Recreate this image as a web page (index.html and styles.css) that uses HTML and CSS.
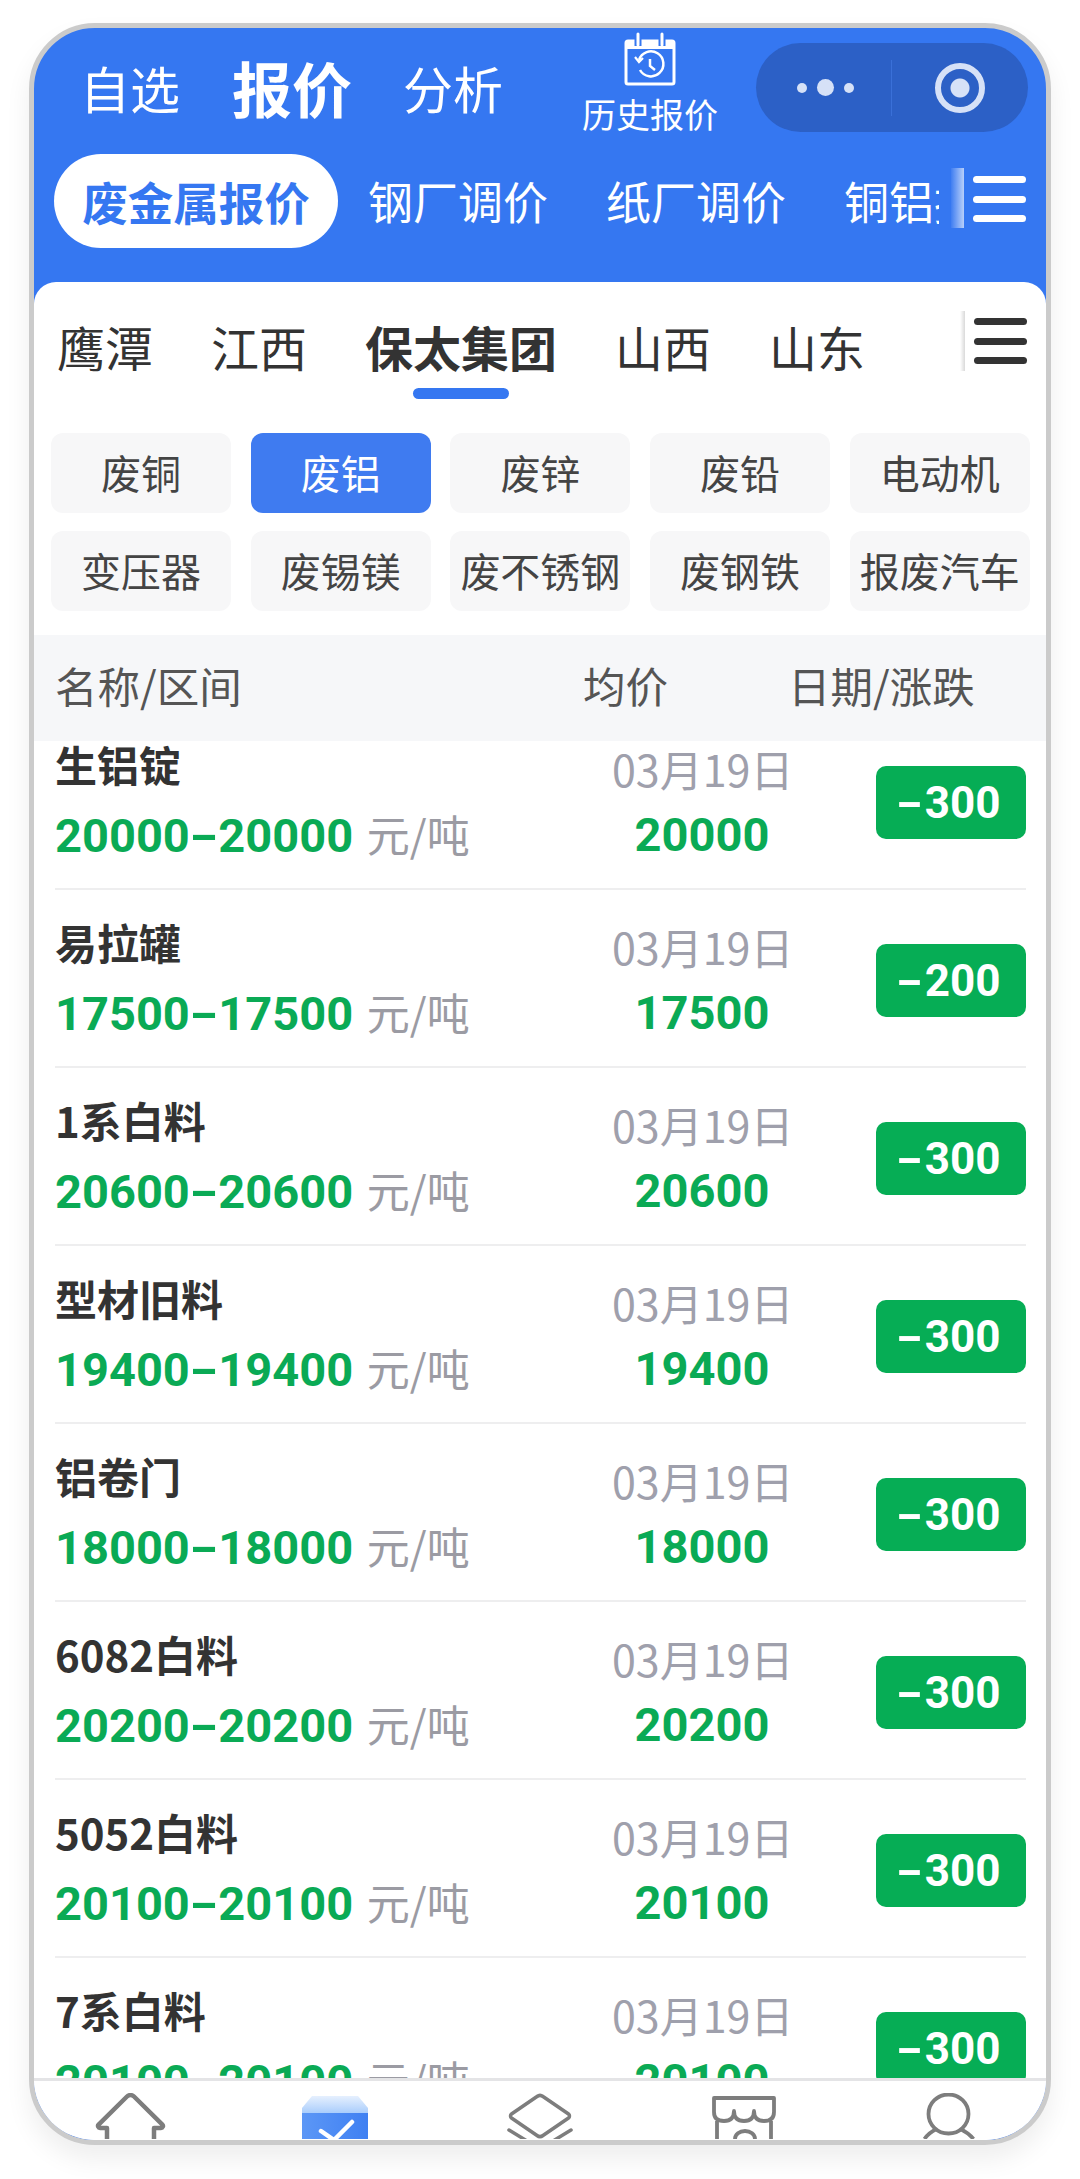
FILE: index.html
```html
<!DOCTYPE html>
<html lang="zh">
<head>
<meta charset="utf-8">
<title>报价</title>
<link rel="stylesheet" href="styles.css">
</head>
<body>
<div class="frame">
  <div class="phone">
    <header class="top">
      <div class="top-row">
        <nav class="main-tabs">
          <span class="mt">自选</span>
          <span class="mt mt-on">报价</span>
          <span class="mt">分析</span>
        </nav>
        <div class="history">
          <svg class="cal" width="52" height="54" viewBox="0 0 52 54">
            <path d="M4 9H48a2 2 0 0 1 2 2V50a2 2 0 0 1-2 2H4a2 2 0 0 1-2-2V11a2 2 0 0 1 2-2Z" fill="none" stroke="#fff" stroke-width="3"/>
            <rect x="2" y="9" width="48" height="8" fill="#fff"/>
            <path d="M14 2V14M38 2V14" stroke="#3577f1" stroke-width="7"/>
            <path d="M14 2V13M38 2V13" stroke="#fff" stroke-width="3" stroke-linecap="round"/>
            <path d="M15 28a12.500 12.500 0 1 1 1 10" fill="none" stroke="#fff" stroke-width="2.500"/>
            <path d="M11 25l4 5 4-4" fill="none" stroke="#fff" stroke-width="2.200"/>
            <path d="M26 27V34L31 38" fill="none" stroke="#fff" stroke-width="2.500"/>
          </svg>
          <span class="history-t">历史报价</span>
        </div>
        <div class="capsule">
          <div class="cap-l"><i class="d"></i><i class="d d-big"></i><i class="d"></i></div>
          <div class="cap-r"><i class="ring"></i></div>
        </div>
      </div>
      <div class="cat-row">
        <span class="pill">废金属报价</span>
        <span class="cat">钢厂调价</span>
        <span class="cat">纸厂调价</span>
        <span class="cat cat-cut">铜铝报价</span>
        <span class="fade"></span>
        <span class="burger burger-w"><i></i><i></i><i></i></span>
      </div>
    </header>
    <main class="sheet">
      <div class="region-row">
        <span class="rg">鹰潭</span>
        <span class="rg">江西</span>
        <span class="rg rg-on">保太集团</span>
        <span class="rg">山西</span>
        <span class="rg">山东</span>
        <span class="fade fade-d"></span>
        <span class="burger burger-d"><i></i><i></i><i></i></span>
      </div>
      <div class="chips">
        <span class="chip">废铜</span><span class="chip chip-on">废铝</span><span class="chip">废锌</span><span class="chip">废铅</span><span class="chip">电动机</span>
        <span class="chip">变压器</span><span class="chip">废锡镁</span><span class="chip">废不锈钢</span><span class="chip">废钢铁</span><span class="chip">报废汽车</span>
      </div>
      <div class="thead">
        <span class="th1">名称/区间</span>
        <span class="th2">均价</span>
        <span class="th3">日期/涨跌</span>
      </div>
      <div class="list">
        <div class="rows">
          <div class="row"><div class="c1"><div class="nm">生铝锭</div><div class="rng"><b>20000<i class="hy">-</i>20000</b> <span>元/吨</span></div></div><div class="c2"><div class="dt">03月19日</div><div class="avg">20000</div></div><div class="c3"><span class="bdg"><i class="hy">-</i>300</span></div></div>
          <div class="row"><div class="c1"><div class="nm">易拉罐</div><div class="rng"><b>17500<i class="hy">-</i>17500</b> <span>元/吨</span></div></div><div class="c2"><div class="dt">03月19日</div><div class="avg">17500</div></div><div class="c3"><span class="bdg"><i class="hy">-</i>200</span></div></div>
          <div class="row"><div class="c1"><div class="nm">1系白料</div><div class="rng"><b>20600<i class="hy">-</i>20600</b> <span>元/吨</span></div></div><div class="c2"><div class="dt">03月19日</div><div class="avg">20600</div></div><div class="c3"><span class="bdg"><i class="hy">-</i>300</span></div></div>
          <div class="row"><div class="c1"><div class="nm">型材旧料</div><div class="rng"><b>19400<i class="hy">-</i>19400</b> <span>元/吨</span></div></div><div class="c2"><div class="dt">03月19日</div><div class="avg">19400</div></div><div class="c3"><span class="bdg"><i class="hy">-</i>300</span></div></div>
          <div class="row"><div class="c1"><div class="nm">铝卷门</div><div class="rng"><b>18000<i class="hy">-</i>18000</b> <span>元/吨</span></div></div><div class="c2"><div class="dt">03月19日</div><div class="avg">18000</div></div><div class="c3"><span class="bdg"><i class="hy">-</i>300</span></div></div>
          <div class="row"><div class="c1"><div class="nm">6082白料</div><div class="rng"><b>20200<i class="hy">-</i>20200</b> <span>元/吨</span></div></div><div class="c2"><div class="dt">03月19日</div><div class="avg">20200</div></div><div class="c3"><span class="bdg"><i class="hy">-</i>300</span></div></div>
          <div class="row"><div class="c1"><div class="nm">5052白料</div><div class="rng"><b>20100<i class="hy">-</i>20100</b> <span>元/吨</span></div></div><div class="c2"><div class="dt">03月19日</div><div class="avg">20100</div></div><div class="c3"><span class="bdg"><i class="hy">-</i>300</span></div></div>
          <div class="row"><div class="c1"><div class="nm">7系白料</div><div class="rng"><b>20100<i class="hy">-</i>20100</b> <span>元/吨</span></div></div><div class="c2"><div class="dt">03月19日</div><div class="avg">20100</div></div><div class="c3"><span class="bdg"><i class="hy">-</i>300</span></div></div>
        </div>
      </div>
      <footer class="tabbar">
        <svg class="ti ti-home" width="71" height="46" viewBox="0 0 71 46"><path d="M12 46V35H5a2 2 0 0 1-1.400-3.400L32 3.500a5 5 0 0 1 7 0L67.400 31.600a2 2 0 0 1-1.400 3.400H59V46" fill="none" stroke="#7d7d7d" stroke-width="4.500" stroke-linejoin="round"/></svg>
        <svg class="ti ti-box" width="66" height="46" viewBox="0 0 66 46"><defs><linearGradient id="bg1" x1="0" y1="0" x2="0" y2="1"><stop offset="0" stop-color="#e6f0fe"/><stop offset="1" stop-color="#a9cdfc"/></linearGradient><linearGradient id="bg2" x1="0" y1="0" x2="1" y2="0"><stop offset="0" stop-color="#5c97f6"/><stop offset="1" stop-color="#3f80f2"/></linearGradient></defs><path d="M10 3H56L66 15V20H0V15Z" fill="url(#bg1)"/><rect y="20" width="66" height="26" fill="url(#bg2)"/><path d="M19 38L32 47L50 29" fill="none" stroke="#fff" stroke-width="4.500" stroke-linecap="round"/></svg>
        <svg class="ti ti-layers" width="68" height="46" viewBox="0 0 66 46"><path d="M30 3.500a5 5 0 0 1 6 0L61.500 21a2.500 2.500 0 0 1 0 4L36 42.500a5 5 0 0 1-6 0L4.500 25a2.500 2.500 0 0 1 0-4Z" fill="none" stroke="#7d7d7d" stroke-width="3.500"/><path d="M2 37L20 48M64 37L46 48" fill="none" stroke="#7d7d7d" stroke-width="3.500" stroke-linecap="round"/></svg>
        <svg class="ti ti-store" width="66" height="46" viewBox="0 0 64 46"><path d="M2 5H62V19q0 9-10 9q-10 0-10-10q0 10-10 10q-10 0-10-10q0 10-10 10q-10 0-10-9Z" fill="none" stroke="#7d7d7d" stroke-width="3.800" stroke-linejoin="round"/><path d="M5 28V46M59 28V46" stroke="#7d7d7d" stroke-width="3.800"/><path d="M23 46a10 8 0 0 1 20 0" fill="none" stroke="#7d7d7d" stroke-width="3.800"/></svg>
        <svg class="ti ti-user" width="53" height="46" viewBox="0 0 52 46"><ellipse cx="25" cy="21" rx="20" ry="19.500" fill="none" stroke="#7d7d7d" stroke-width="3.800"/><path d="M13 36Q5 40 1 46M37 36Q45 40 50 46" fill="none" stroke="#7d7d7d" stroke-width="3.800"/></svg>
      </footer>
    </main>
  </div>
</div>
</body>
</html>
```
FILE: styles.css
```css
*{box-sizing:border-box}
html,body{margin:0;padding:0;background:#fff}
body{width:1080px;height:2179px;overflow:hidden;font-family:"Noto Sans CJK SC","Noto Sans",sans-serif}
.frame{padding:23px 29px 0 29px;height:2179px}
.phone{width:1022px;height:2122px;border:5px solid #cbcbcb;border-radius:66px;overflow:hidden;background:#3577f1;display:flex;flex-direction:column;box-shadow:0 14px 26px rgba(0,0,0,.07)}
.top{height:254px;flex:none;color:#fff;padding:0 0 0 20px}
.top-row{height:126px;display:flex;align-items:flex-start}
.main-tabs{display:flex;align-items:center;height:100px;margin-top:9px;padding-left:26px}
.mt{font-size:50px;line-height:60px;width:100px;margin-right:52px;white-space:nowrap}
.mt-on{font-size:60px;font-weight:700;width:120px;margin-right:51px}
.main-tabs .mt:last-child{margin-right:0}
.history{display:flex;flex-direction:column;align-items:center;margin-left:77px;width:140px;padding-top:4px}
.cal{display:block}
.history-t{font-size:34px;line-height:44px;margin-top:6px;white-space:nowrap}
.capsule{margin-left:36px;margin-top:15px;width:272px;height:89px;border-radius:45px;background:#2c60c6;display:flex;align-items:center;flex:none}
.cap-l{width:136px;height:56px;display:flex;align-items:center;justify-content:center;gap:10px;border-right:1px solid #3a70d8;padding-left:4px}
.d{width:10px;height:10px;border-radius:50%;background:#d6e1f7;display:block}
.d-big{width:17px;height:17px}
.cap-r{flex:1;display:flex;align-items:center;justify-content:center}
.ring{display:block;width:50px;height:50px;border-radius:50%;border:6px solid #d6e1f7;position:relative;background:radial-gradient(circle,#d6e1f7 0 9px,transparent 10px)}
.cat-row{height:94px;display:flex;align-items:center;position:relative;overflow:hidden;width:991px}
.pill{width:284px;height:94px;border-radius:47px;background:#fff;color:#3577f1;font-size:45.500px;font-weight:700;display:flex;align-items:center;justify-content:center;flex:none;white-space:nowrap}
.cat{font-size:45px;line-height:60px;width:180px;margin-left:30px;flex:none;white-space:nowrap}
.cat+.cat{margin-left:58px}
.cat-cut{width:95px;overflow:hidden}
.fade{position:absolute;right:81px;top:14px;width:13px;height:60px;background:linear-gradient(90deg,rgba(255,255,255,.05),rgba(255,255,255,.65))}
.burger{position:absolute;right:19px;top:22px;width:53px;height:46px;display:flex;flex-direction:column;justify-content:space-between}
.burger i{display:block;height:7px;border-radius:4px}
.burger-w i{background:#fff}
.sheet{flex:1;min-height:0;background:#fff;border-radius:22px 22px 0 0;display:flex;flex-direction:column;position:relative;overflow:hidden}
.region-row{height:126px;flex:none;display:flex;align-items:flex-start;position:relative;padding-left:23px}
.rg{font-size:48px;line-height:60px;margin-top:34px;margin-right:58px;position:relative;white-space:nowrap;color:#333}
.rg-on{font-weight:700}
.rg-on::after{content:"";position:absolute;left:48px;top:72px;width:96px;height:11px;border-radius:6px;background:#3577f1}
.fade-d{top:29px;height:60px;width:5px;right:81px;background:linear-gradient(90deg,rgba(0,0,0,0),rgba(0,0,0,.15))}
.burger-d{top:36px}
.burger-d i{background:#333}
.chips{flex:none;display:grid;grid-template-columns:repeat(5,180px);grid-auto-rows:80px;align-content:start;gap:18px 19.700px;padding:25px 0 0 17px;height:227px}
.chip{height:80px;border-radius:12px;background:#f7f7f8;color:#444;font-size:40px;display:flex;align-items:center;justify-content:center;white-space:nowrap;padding-bottom:2px}
.chip-on{background:#3f7bf0;color:#fff}
.thead{flex:none;height:106px;background:#f6f7f9;display:flex;align-items:center;color:#555;font-size:42.500px;position:relative;z-index:1;padding-bottom:7px}
.th1{margin-left:21px;width:528px}
.th2{width:205px}
.th3{white-space:nowrap}
.list{flex:1;min-height:0;overflow:hidden}
.rows{margin-top:-29px}
.row{height:178px;margin:0 20px 0 21px;display:flex;border-bottom:2px solid #eeeeef;position:relative}
.c1{width:557px;padding-top:26px}
.nm{font-size:42px;font-weight:700;line-height:52px;color:#333;white-space:nowrap}
.rng{margin-top:13px;line-height:60px;white-space:nowrap}
.rng b{font-family:Roboto,"Noto Sans",sans-serif;font-size:47px;font-weight:700;color:#0aaa55}
.hy{font-style:normal;display:inline-block;margin:0 5px;transform:scaleX(1.700)}
.rng span{font-size:43px;color:#9b9ba3;margin-left:10px}
.c2{width:180px;text-align:center;padding-top:31px}
.dt{font-size:43px;line-height:50px;color:#9fa0ac;white-space:nowrap}
.avg{font-family:Roboto,"Noto Sans",sans-serif;font-size:47px;font-weight:700;color:#0aaa55;line-height:60px;margin-top:12px}
.c3{flex:1;display:flex;justify-content:flex-end;padding-top:54px}
.bdg{width:150px;height:73px;border-radius:10px;background:#06ad55;color:#fff;font-family:Roboto,"Noto Sans",sans-serif;font-size:44px;font-weight:700;display:flex;align-items:center;justify-content:center}
.bdg .hy{margin:0 6px 0 0}
.tabbar{flex:none;height:62px;border-top:3px solid #e4e4e6;background:#fff;display:flex;align-items:flex-start;padding:12px 0 0 61px;overflow:hidden}
.ti{flex:none;display:block}
.ti-box{margin-left:136px}
.ti-layers{margin-left:138px}
.ti-store{margin-left:137px}
.ti-user{margin-left:146px}
```
